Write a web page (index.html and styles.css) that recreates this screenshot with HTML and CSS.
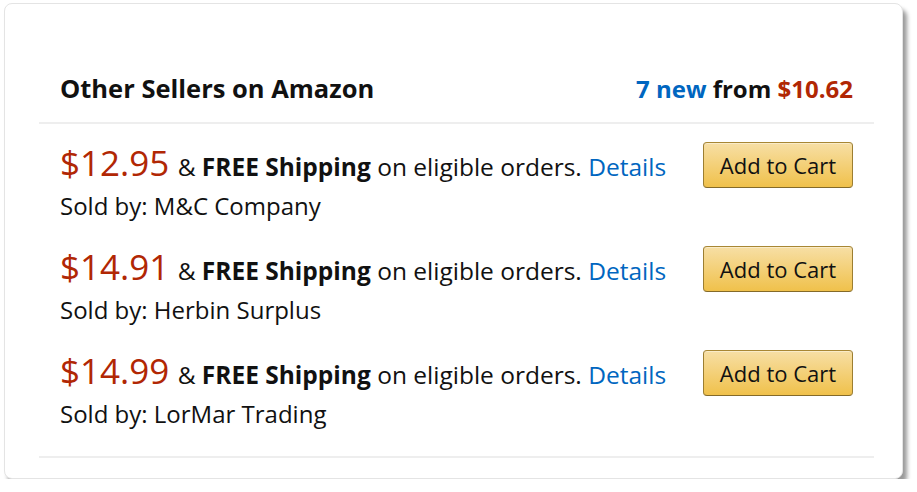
FILE: index.html
```html
<!DOCTYPE html>
<html lang="en">
<head>
  <meta charset="UTF-8">
  <meta name="viewport" content="width=device-width, initial-scale=1.0">
  <title>Other Sellers on Amazon</title>
  <link rel="stylesheet" href="styles.css">
</head>
<body>
  <div class="card">
    <header class="card-head">
      <h2>Other Sellers on Amazon</h2>
      <p class="summary"><a href="#">7 new</a> from <span class="price-sm">$10.62</span></p>
    </header>

    <ul class="offers">
      <li class="offer">
        <div class="offer-info">
          <p class="line"><span class="price">$12.95</span> &amp; <b>FREE Shipping</b> on eligible orders. <a href="#">Details</a></p>
          <p class="seller">Sold by: M&amp;C Company</p>
        </div>
        <button class="cart-btn">Add to Cart</button>
      </li>
      <li class="offer">
        <div class="offer-info">
          <p class="line"><span class="price">$14.91</span> &amp; <b>FREE Shipping</b> on eligible orders. <a href="#">Details</a></p>
          <p class="seller">Sold by: Herbin Surplus</p>
        </div>
        <button class="cart-btn">Add to Cart</button>
      </li>
      <li class="offer">
        <div class="offer-info">
          <p class="line"><span class="price">$14.99</span> &amp; <b>FREE Shipping</b> on eligible orders. <a href="#">Details</a></p>
          <p class="seller">Sold by: LorMar Trading</p>
        </div>
        <button class="cart-btn">Add to Cart</button>
      </li>
    </ul>
  </div>
</body>
</html>
```

FILE: styles.css
```css
body {
  margin: 0;
  background: #fff;
  font-family: "Open Sans", "Noto Sans", Arial, sans-serif;
  color: #111;
}

a {
  color: #0066c0;
  text-decoration: none;
}

.card {
  box-sizing: border-box;
  width: 899px;
  height: 476px;
  margin: 3px 0 0 4px;
  padding: 0 28px 0 34px;
  background: #fff;
  border-radius: 8px;
  border: 1px solid #e4e4e4;
  box-shadow: 4px 6px 4px rgba(0, 0, 0, 0.4);
}

.card-head {
  display: flex;
  justify-content: space-between;
  align-items: baseline;
  height: 120px;
  padding: 0 21px;
  border-bottom: 2px solid #eee;
  box-sizing: border-box;
}

.card-head h2 {
  margin: 67px 0 0;
  font-size: 25.5px;
  font-weight: 700;
}

.summary {
  margin: 0;
  font-size: 24px;
  font-weight: 700;
}

.price-sm {
  color: #b12704;
}

.offers {
  list-style: none;
  margin: 0;
  padding: 19px 21px 1px;
  border-bottom: 2px solid #eee;
}

.offer {
  display: flex;
  justify-content: space-between;
  align-items: flex-start;
  height: 104px;
}

.offer-info p {
  margin: 0;
}

.line {
  font-size: 24.5px;
  line-height: 40px;
  white-space: nowrap;
}

.price {
  color: #b12704;
  font-size: 35px;
  margin-right: 2px;
}

.seller {
  font-size: 24px;
  line-height: 37px;
}

.cart-btn {
  width: 150px;
  height: 46px;
  margin-top: -1px;
  font-family: inherit;
  font-size: 22px;
  color: #111;
  background: linear-gradient(to bottom, #f7dfa5, #f0c14b);
  border: 1px solid;
  border-color: #a88734 #9c7e31 #846a29;
  border-radius: 4px;
  box-shadow: inset 0 1px 0 rgba(255, 255, 255, 0.4);
  cursor: pointer;
}
```
